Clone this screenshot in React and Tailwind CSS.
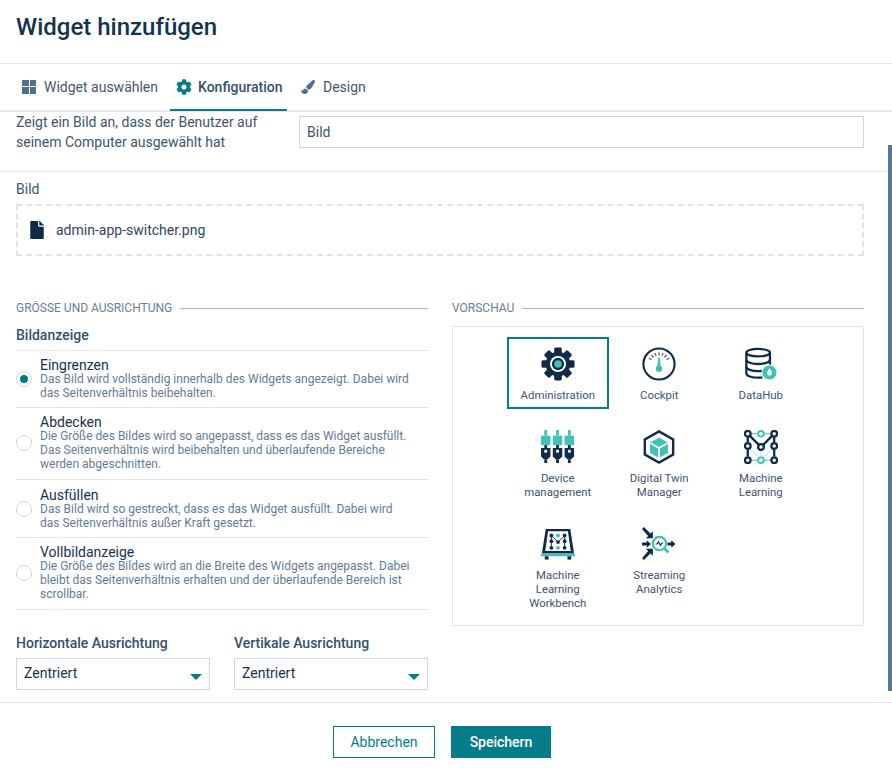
import { FaCog, FaFile, FaPaintBrush } from "react-icons/fa";

const NAVY = "#0f2b47";
const TEAL = "#42c2b5";

function GearIcon() {
    return (
        <svg width="34" height="34" viewBox="0 0 36 36">
            {[0, 45, 90, 135].map((a) => (
                <rect key={a} x="14" y="0.500" width="8" height="35" rx="1.500" fill={NAVY} transform={`rotate(${a} 18 18)`} />
            ))}
            <circle cx="18" cy="18" r="13" fill={NAVY} />
            <circle cx="18" cy="18" r="8.500" fill="#fff" />
            <circle cx="18" cy="18" r="6.500" fill={NAVY} />
            <circle cx="18" cy="18" r="4" fill={TEAL} />
        </svg>
    );
}

function CockpitIcon() {
    return (
        <svg width="34" height="34" viewBox="0 0 36 36">
            <circle cx="18" cy="18" r="16.500" fill="none" stroke={NAVY} strokeWidth="2.200" />
            {[-60, -40, -20, 0, 20, 40, 60].map((a) => (
                <line key={a} x1="18" y1="5.500" x2="18" y2="9" stroke="#5a6f85" strokeWidth="1.400" transform={`rotate(${a} 18 18)`} />
            ))}
            <path d="M17.200 11h1.600l1 10h-3.600z" fill={TEAL} />
            <circle cx="18" cy="23" r="3.400" fill={TEAL} />
        </svg>
    );
}

function DataHubIcon() {
    return (
        <svg width="34" height="34" viewBox="0 0 36 36">
            <g fill="none" stroke={NAVY} strokeWidth="2.400">
                <ellipse cx="15" cy="6" rx="12.500" ry="4" />
                <path d="M2.500 6v22c0 2.500 5.500 4.500 12.500 4.500 1.500 0 3-.1 4.500-.3" />
                <path d="M27.500 6v13" />
                <path d="M2.500 13.500c0 2.500 5.500 4.500 12.500 4.500s12.500-2 12.500-4.500" />
                <path d="M2.500 21c0 2.500 5.500 4.500 12.500 4.500 1.500 0 3-.1 4.500-.3" />
            </g>
            <circle cx="27" cy="27" r="8" fill={TEAL} stroke="#fff" strokeWidth="1" />
            <path d="M27 22.500c1.500 2.500 2.500 3.800 2.500 5.200a2.500 2.500 0 0 1-5 0c0-1.400 1-2.700 2.500-5.200z" fill="#fff" />
        </svg>
    );
}

function DeviceIcon() {
    const plug = (x) => (
        <g key={x}>
            <rect x={x + 3.500} y="0" width="3" height="6" fill={TEAL} />
            <rect x={x} y="6" width="10" height="10" fill={TEAL} />
            <rect x={x + 3.500} y="16" width="3" height="3" fill={NAVY} />
            <path d={`M${x} 19h10v9l-3 3h-4l-3-3z`} fill={NAVY} />
            <rect x={x + 3.500} y="31" width="3" height="4" fill={NAVY} />
            <rect x={x + 3.500} y="21" width="3" height="3" fill="#fff" />
        </g>
    );
    return (
        <svg width="34" height="34" viewBox="0 0 36 36">
            {[0, 12.500, 25].map(plug)}
        </svg>
    );
}

function TwinIcon() {
    return (
        <svg width="34" height="34" viewBox="0 0 36 36">
            <path d="M18 1.500 33 10v16l-15 8.500L3 26V10z" fill="none" stroke={NAVY} strokeWidth="2.600" />
            <path d="M18 8 27 13 18 18 9 13z" fill={TEAL} />
            <path d="M8.500 14.500 17 19.500V29l-8.500-5z" fill={TEAL} />
            <path d="M27.500 14.500 19 19.500V29l8.500-5z" fill={TEAL} />
        </svg>
    );
}

function MlIcon() {
    return (
        <svg width="34" height="34" viewBox="0 0 36 36">
            <g stroke="#8fdcd3" strokeWidth="0.800" fill="none">
                <path d="M4 17 18 32 32 17M18 18v14" />
            </g>
            <g stroke={TEAL} strokeWidth="1.200" fill="none">
                <path d="M4 4h28M4 32h28" />
            </g>
            <g stroke={NAVY} strokeWidth="2.400" fill="none">
                <path d="M4 7v6M4 20v8M32 7v6M32 20v8M6 6l10 10M30 6 20 16" />
            </g>
            <g fill="#fff" stroke={TEAL} strokeWidth="2">
                <circle cx="18" cy="4" r="3" />
                <circle cx="18" cy="32" r="3" />
            </g>
            <g fill="#fff" stroke={NAVY} strokeWidth="2.400">
                <circle cx="4" cy="4" r="3" />
                <circle cx="32" cy="4" r="3" />
                <circle cx="4" cy="17" r="3" />
                <circle cx="32" cy="17" r="3" />
                <circle cx="18" cy="18" r="3" />
                <circle cx="4" cy="32" r="3" />
                <circle cx="32" cy="32" r="3" />
            </g>
        </svg>
    );
}

function WorkbenchIcon() {
    return (
        <svg width="34" height="34" viewBox="0 0 36 36">
            <path d="M5 2h26l4 26H1z" fill={NAVY} />
            <path d="M7.500 4.500h21l3 21H4.500z" fill="#fff" />
            <rect x="0" y="28" width="36" height="3" fill={TEAL} />
            <rect x="4" y="31" width="4" height="3.500" fill={NAVY} />
            <rect x="28" y="31" width="4" height="3.500" fill={NAVY} />
            <g stroke={NAVY} strokeWidth="1" fill="none">
                <path d="M11 9v12M25 9v12M11 9l7 7 7-7" />
            </g>
            <g fill={TEAL}>
                <circle cx="18" cy="9" r="2" />
                <circle cx="18" cy="22" r="2" />
            </g>
            <g fill={NAVY}>
                <circle cx="11" cy="9" r="2" />
                <circle cx="25" cy="9" r="2" />
                <circle cx="11" cy="15" r="2" />
                <circle cx="25" cy="15" r="2" />
                <circle cx="18" cy="16" r="2" />
                <circle cx="11" cy="22" r="2" />
                <circle cx="25" cy="22" r="2" />
            </g>
        </svg>
    );
}

function StreamingIcon() {
    return (
        <svg width="34" height="34" viewBox="0 0 36 36">
            <g fill={NAVY}>
                <path d="M0 2 2 0 9 7 11.500 4.500V12H4L6.500 9.500z" />
                <path d="M0 16.500h5V14l4.500 4L5 22v-2.500H0z" />
                <path d="M0 33 2 35 9 28 11.500 30.500V23H4L6.500 25.500z" />
                <path d="M27 16.500h4V14l4.500 4L31 22v-2.500h-4z" />
            </g>
            <circle cx="18.500" cy="17.500" r="7" fill="#fff" stroke={TEAL} strokeWidth="2.400" />
            <path d="M23.500 22.500 28 27" stroke={TEAL} strokeWidth="2.800" />
            <path d="M14.500 18h1.500l1.500-2.500 2 4 1.500-2.500h1.500" stroke={NAVY} strokeWidth="1.200" fill="none" />
        </svg>
    );
}

const apps = [
    { label: ["Administration"], icon: <GearIcon />, active: true },
    { label: ["Cockpit"], icon: <CockpitIcon /> },
    { label: ["DataHub"], icon: <DataHubIcon /> },
    { label: ["Device", "management"], icon: <DeviceIcon /> },
    { label: ["Digital Twin", "Manager"], icon: <TwinIcon /> },
    { label: ["Machine", "Learning"], icon: <MlIcon /> },
    { label: ["Machine", "Learning", "Workbench"], icon: <WorkbenchIcon /> },
    { label: ["Streaming", "Analytics"], icon: <StreamingIcon /> },
];

const options = [
    {
        title: "Eingrenzen",
        checked: true,
        pad: "pt-[7px] pb-[7px]",
        lines: ["Das Bild wird vollständig innerhalb des Widgets angezeigt. Dabei wird", "das Seitenverhältnis beibehalten."],
    },
    {
        title: "Abdecken",
        pad: "pt-[7px] pb-[8px]",
        lines: [
            "Die Größe des Bildes wird so angepasst, dass es das Widget ausfüllt.",
            "Das Seitenverhältnis wird beibehalten und überlaufende Bereiche",
            "werden abgeschnitten.",
        ],
    },
    {
        title: "Ausfüllen",
        pad: "pt-[8px] pb-[7px]",
        lines: ["Das Bild wird so gestreckt, dass es das Widget ausfüllt. Dabei wird", "das Seitenverhältnis außer Kraft gesetzt."],
    },
    {
        title: "Vollbildanzeige",
        pad: "pt-[7px] pb-[8px]",
        lines: [
            "Die Größe des Bildes wird an die Breite des Widgets angepasst. Dabei",
            "bleibt das Seitenverhältnis erhalten und der überlaufende Bereich ist",
            "scrollbar.",
        ],
    },
];

function SectionTitle({ children }) {
    return (
        <div className="flex h-[14px] items-center gap-2 text-xs leading-[14px] text-[#6b8096]">
            <span className="whitespace-nowrap">{children}</span>
            <span className="h-px flex-1 bg-[#a9b7c4]" />
        </div>
    );
}

function Select({ label }) {
    return (
        <div className="w-[194px]">
            <div className="h-[16px] text-sm leading-[16px] font-medium text-[#34506b]">{label}</div>
            <div className="relative mt-[7px] flex h-[32px] items-center border border-[#cfd7e0] pb-[2px] pl-[7px] text-sm text-[#14334f]">
                Zentriert
                <span className="absolute top-[15px] right-[7px] h-0 w-0 border-x-[6px] border-t-[6px] border-x-transparent border-t-[#057c8a]" />
            </div>
        </div>
    );
}

export default function App() {
    return (
        <div className="relative flex h-[777px] w-[892px] flex-col overflow-hidden bg-white font-['Roboto',sans-serif]">
            <header className="flex h-[64px] items-center border-b border-[#e4e6ea] px-4 pb-[10px] text-2xl font-medium text-[#14334f]">
                Widget hinzufügen
            </header>

            <nav className="flex h-[48px] border-b-2 border-[#e4e6ea] pl-[6px] text-sm text-[#3f5870]">
                <div className="flex h-[47px] w-[164px] items-center gap-2 pl-4 pb-[2px]">
                    <span className="grid h-[14px] w-[14px] grid-cols-2 gap-px">
                        <span className="bg-[#4f6f91]" />
                        <span className="bg-[#4f6f91]" />
                        <span className="bg-[#4f6f91]" />
                        <span className="bg-[#4f6f91]" />
                    </span>
                    Widget auswählen
                </div>
                <div className="flex h-[47px] w-[117px] items-center gap-[6px] border-b-2 border-[#057c8a] pl-[6px] font-medium text-[#34506b]">
                    <FaCog className="text-[16px] text-[#057c8a]" />
                    Konfiguration
                </div>
                <div className="flex h-[47px] items-center gap-2 pl-[14px] pb-[2px]">
                    <FaPaintBrush className="text-[14px] text-[#4f6f91]" />
                    Design
                </div>
            </nav>

            <main className="h-[590px] overflow-hidden">
                <section className="flex h-[60px] gap-[18px] border-b border-[#e4e6ea] pr-7 pl-4">
                    <p className="w-[265px] text-sm leading-[20px] text-[#3c5670]">
                        Zeigt ein Bild an, dass der Benutzer auf
                        <br />
                        seinem Computer ausgewählt hat
                    </p>
                    <div className="mt-[4px] flex h-[32px] w-[565px] items-center border border-[#cfd7e0] pl-[7px] text-sm text-[#3c5670]">
                        Bild
                    </div>
                </section>

                <section className="pt-[9px] pr-7 pl-4">
                    <div className="h-[16px] text-sm leading-[16px] text-[#3c5670]">Bild</div>
                    <div className="mt-[7px] flex h-[52px] items-center gap-[10px] border-2 border-dashed border-[#e1e4ea] pl-[10px] text-sm text-[#2c4763]">
                        <FaFile className="text-[18px] text-[#0e2b47]" />
                        admin-app-switcher.png
                    </div>
                </section>

                <section className="flex gap-6 px-4 pt-[45px]">
                    <div className="w-[412px]">
                        <SectionTitle>GRÖSSE UND AUSRICHTUNG</SectionTitle>
                        <div className="mt-[12px] h-[23px] text-sm leading-[16px] font-medium text-[#34506b]">Bildanzeige</div>
                        <div className="border-t border-[#e1e4ea]">
                            {options.map((o) => (
                                <div key={o.title} className={`flex items-center gap-2 border-b border-[#e1e4ea] ${o.pad}`}>
                                    <span
                                        className={
                                            o.checked
                                                ? "flex h-4 w-4 items-center justify-center rounded-full border border-[#d3dae2]"
                                                : "h-4 w-4 rounded-full border border-[#d3dae2]"
                                        }
                                    >
                                        {o.checked && <span className="h-2 w-2 rounded-full bg-[#057c8a]" />}
                                    </span>
                                    <div className="flex-1">
                                        <div className="text-sm leading-[14px] text-[#14334f]">{o.title}</div>
                                        {o.lines.map((l) => (
                                            <div key={l} className="text-xs leading-[14px] whitespace-nowrap text-[#5f7d98]">
                                                {l}
                                            </div>
                                        ))}
                                    </div>
                                </div>
                            ))}
                        </div>
                        <div className="mt-[25px] flex gap-6">
                            <Select label="Horizontale Ausrichtung" />
                            <Select label="Vertikale Ausrichtung" />
                        </div>
                    </div>

                    <div className="w-[412px]">
                        <SectionTitle>VORSCHAU</SectionTitle>
                        <div className="mt-[11px] h-[300px] border border-[#e1e4ea] pt-[10px] pl-[54px]">
                            <div className="grid grid-cols-[101.500px_101.500px_101.500px] gap-y-[11px]">
                                {apps.map((a) => (
                                    <div
                                        key={a.label.join(" ")}
                                        className={
                                            a.active
                                                ? "flex flex-col items-center border-2 border-[#057c8a] pt-[8px] pb-[5px] text-center"
                                                : "flex flex-col items-center border-2 border-transparent pt-[8px] pb-[5px] text-center"
                                        }
                                    >
                                        <div className="h-[36px]">{a.icon}</div>
                                        <div className="mt-[5px] text-[11.400px] leading-[14px] text-[#3c5670]">
                                            {a.label.map((l) => (
                                                <div key={l}>{l}</div>
                                            ))}
                                        </div>
                                    </div>
                                ))}
                            </div>
                        </div>
                    </div>
                </section>
            </main>

            <footer className="flex h-[75px] justify-center gap-4 border-t border-[#e4e6ea] pt-[23px] pr-[8px] text-sm">
                <button className="h-[32px] w-[102px] border border-[#057c8a] text-[#057c8a]">Abbrechen</button>
                <button className="h-[32px] w-[100px] bg-[#057c8a] font-medium text-white">Speichern</button>
            </footer>

            <div className="absolute top-[145px] right-0 h-[546px] w-1 bg-[#56789a]" />
        </div>
    );
}
